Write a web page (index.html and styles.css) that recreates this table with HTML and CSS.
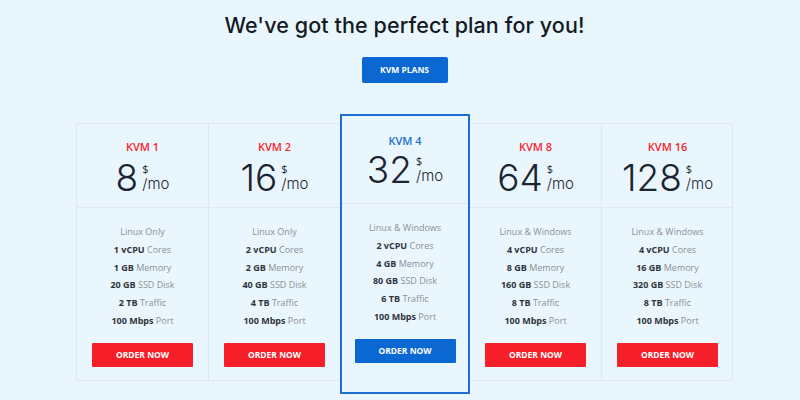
FILE: index.html
```html
<!DOCTYPE html>
<html>
<head>
<meta charset="utf-8">
<link rel="stylesheet" href="styles.css">
</head>
<body>
<div class="page">
  <h1 class="title">We've got the perfect plan for you!</h1>
  <div class="tabs"><span class="tab">KVM PLANS</span></div>
  <div class="table">
    <div class="plan">
      <div class="plan-head">
        <div class="plan-name">KVM 1</div>
        <div class="price"><span class="amount">8</span><span class="unit"><span class="cur">$</span><span class="per">/mo</span></span></div>
      </div>
      <ul class="features">
        <li>Linux Only</li>
        <li><b>1 vCPU</b> Cores</li>
        <li><b>1 GB</b> Memory</li>
        <li><b>20 GB</b> SSD Disk</li>
        <li><b>2 TB</b> Traffic</li>
        <li><b>100 Mbps</b> Port</li>
      </ul>
      <a class="btn">ORDER NOW</a>
    </div>
    <div class="plan">
      <div class="plan-head">
        <div class="plan-name">KVM 2</div>
        <div class="price"><span class="amount">16</span><span class="unit"><span class="cur">$</span><span class="per">/mo</span></span></div>
      </div>
      <ul class="features">
        <li>Linux Only</li>
        <li><b>2 vCPU</b> Cores</li>
        <li><b>2 GB</b> Memory</li>
        <li><b>40 GB</b> SSD Disk</li>
        <li><b>4 TB</b> Traffic</li>
        <li><b>100 Mbps</b> Port</li>
      </ul>
      <a class="btn">ORDER NOW</a>
    </div>
    <div class="plan featured">
      <div class="plan-head">
        <div class="plan-name">KVM 4</div>
        <div class="price"><span class="amount">32</span><span class="unit"><span class="cur">$</span><span class="per">/mo</span></span></div>
      </div>
      <ul class="features">
        <li>Linux &amp; Windows</li>
        <li><b>2 vCPU</b> Cores</li>
        <li><b>4 GB</b> Memory</li>
        <li><b>80 GB</b> SSD Disk</li>
        <li><b>6 TB</b> Traffic</li>
        <li><b>100 Mbps</b> Port</li>
      </ul>
      <a class="btn">ORDER NOW</a>
    </div>
    <div class="plan">
      <div class="plan-head">
        <div class="plan-name">KVM 8</div>
        <div class="price"><span class="amount">64</span><span class="unit"><span class="cur">$</span><span class="per">/mo</span></span></div>
      </div>
      <ul class="features">
        <li>Linux &amp; Windows</li>
        <li><b>4 vCPU</b> Cores</li>
        <li><b>8 GB</b> Memory</li>
        <li><b>160 GB</b> SSD Disk</li>
        <li><b>8 TB</b> Traffic</li>
        <li><b>100 Mbps</b> Port</li>
      </ul>
      <a class="btn">ORDER NOW</a>
    </div>
    <div class="plan">
      <div class="plan-head">
        <div class="plan-name">KVM 16</div>
        <div class="price"><span class="amount">128</span><span class="unit"><span class="cur">$</span><span class="per">/mo</span></span></div>
      </div>
      <ul class="features">
        <li>Linux &amp; Windows</li>
        <li><b>4 vCPU</b> Cores</li>
        <li><b>16 GB</b> Memory</li>
        <li><b>320 GB</b> SSD Disk</li>
        <li><b>8 TB</b> Traffic</li>
        <li><b>100 Mbps</b> Port</li>
      </ul>
      <a class="btn">ORDER NOW</a>
    </div>
  </div>
</div>
</body>
</html>
```
FILE: styles.css
```css
html, body {
  margin: 0;
  padding: 0;
  background: #eaf6fd;
  height: 400px;
  overflow: hidden;
}
body {
  font-family: "Open Sans", "Liberation Sans", sans-serif;
}
.page {
  padding-left: 9px;
  display: flex;
  flex-direction: column;
  align-items: center;
}
.title {
  margin: 11px 0 0;
  font-family: "Inter", "Open Sans", sans-serif;
  font-weight: 500;
  font-size: 21.5px;
  line-height: 28px;
  color: #141a22;
  letter-spacing: 0.1px;
}
.tabs {
  margin-top: 18px;
  display: flex;
}
.tab {
  display: block;
  width: 86px;
  height: 26px;
  line-height: 26px;
  text-align: center;
  background: #0b68d3;
  color: #fff;
  font-size: 8.5px;
  font-weight: 700;
  border-radius: 2px;
}
.table {
  margin-top: 40px;
  display: flex;
  align-items: stretch;
  border: 1px solid #dde8ef;
  width: 655px;
}
.plan {
  flex: 0 0 131px;
  display: flex;
  flex-direction: column;
  align-items: center;
  padding-bottom: 13px;
}
.plan + .plan {
  border-left: 1px solid #dde8ef;
}
.plan-head {
  align-self: stretch;
  height: 84px;
  box-sizing: border-box;
  padding-top: 15px;
  border-bottom: 1px solid #dde8ef;
  display: flex;
  flex-direction: column;
  align-items: center;
}
.plan-name {
  color: #f6262f;
  font-size: 11px;
  font-weight: 600;
  line-height: 16px;
}
.price {
  display: flex;
  align-items: flex-start;
  margin-top: 3px;
  color: #1b2530;
}
.amount {
  font-family: "Inter", sans-serif;
  font-weight: 300;
  font-size: 37px;
  line-height: 40px;
}
.unit {
  display: flex;
  flex-direction: column;
  gap: 1px;
  margin-left: 4px;
  padding-top: 5px;
}
.cur {
  font-size: 11px;
  line-height: 12px;
  font-weight: 500;
}
.per {
  font-family: "Inter", sans-serif;
  font-weight: 300;
  font-size: 15px;
  line-height: 16px;
}
.features {
  list-style: none;
  margin: 0;
  padding: 15px 0 0;
  text-align: center;
}
.features li {
  font-size: 9px;
  line-height: 17.8px;
  color: #8a8f95;
}
.features b {
  color: #2f353b;
  font-weight: 700;
}
.btn {
  display: block;
  margin-top: 13px;
  width: 101px;
  height: 24px;
  line-height: 24px;
  text-align: center;
  background: #f61f29;
  color: #fff;
  font-size: 8.5px;
  font-weight: 700;
  border-radius: 1px;
}
.plan.featured {
  flex: 0 0 130px;
  box-sizing: border-box;
  margin: -10px 0 -14px;
  border: 2px solid #1d6fd1;
  background: #eaf6fd;
  padding-bottom: 27px;
  position: relative;
  z-index: 1;
}
.plan.featured + .plan {
  border-left: none;
}
.featured .plan-head {
  height: 88px;
  padding-top: 17px;
}
.featured .plan-name {
  color: #1a6fd0;
}
.featured .price {
  margin-top: 1px;
}
.featured .btn {
  background: #0b68d3;
}
```
